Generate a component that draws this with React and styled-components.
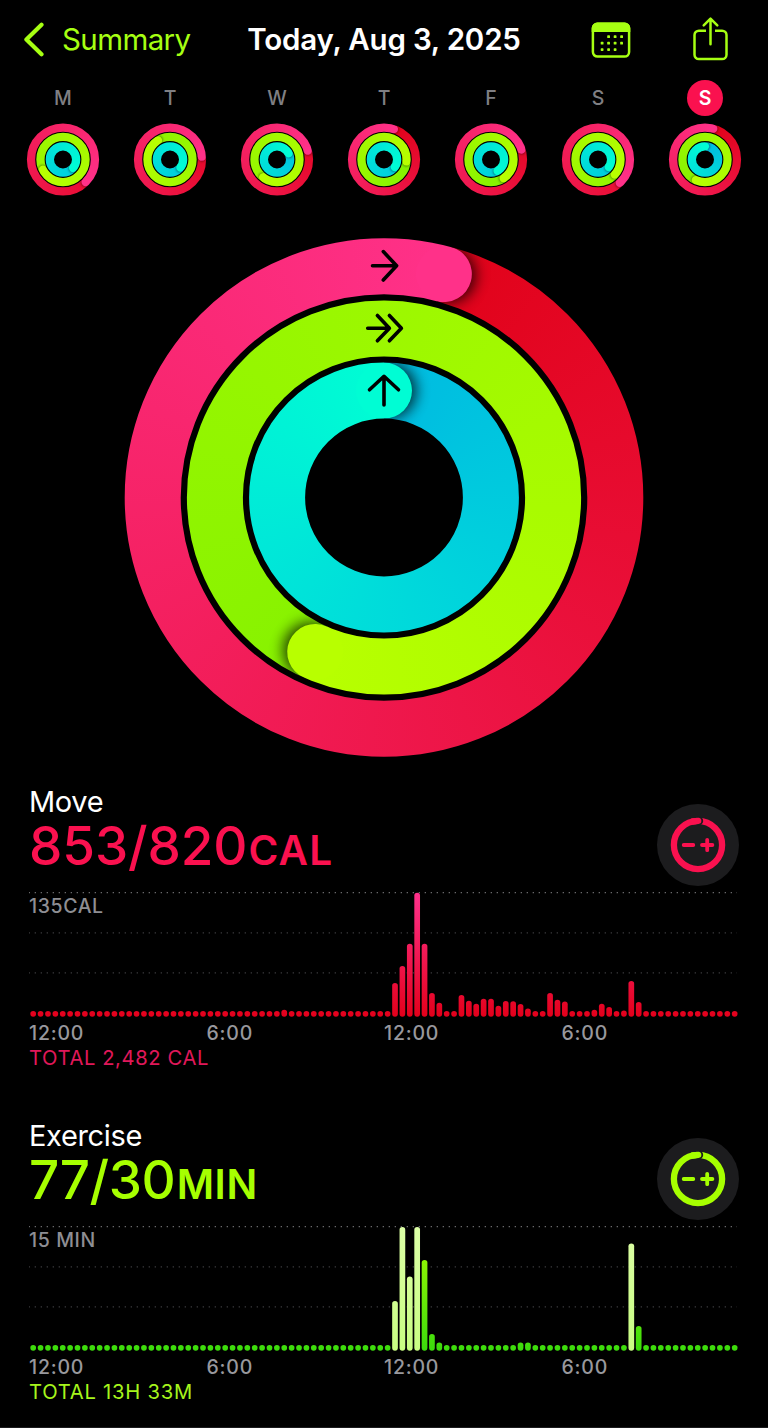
import React from "react";
import styled, { createGlobalStyle } from "styled-components";

const GlobalStyle = createGlobalStyle`
  body {
    margin: 0;
    background: #000;
  }
`;

const Screen = styled.div`
  box-sizing: border-box;
  width: 768px;
  height: 1428px;
  overflow: hidden;
  background: #000;
  border-bottom: 1px solid #1c1c1e;
  font-family: Inter, "Liberation Sans", sans-serif;
  color: #fff;
  white-space: nowrap;
`;

const Header = styled.header`
  display: grid;
  grid-template-columns: 1fr auto 1fr;
  align-items: center;
  height: 78px;
  padding: 0 38px 2px 23px;
`;

const BackLink = styled.a`
  display: flex;
  align-items: center;
  gap: 17px;
  color: #a6ff12;
  font-size: 29.5px;
  letter-spacing: -0.6px;
`;

const Title = styled.h1`
  margin: 0 0 0 15px;
  font-size: 29.5px;
  font-weight: 600;
  letter-spacing: -0.2px;
`;

const Actions = styled.div`
  display: flex;
  justify-content: flex-end;
  align-items: center;
  gap: 61px;

  svg {
    display: block;
  }
`;

const Week = styled.ul`
  display: flex;
  justify-content: space-between;
  margin: 0;
  padding: 0 26px;
  list-style-type: none;
`;

const Day = styled.li`
  display: flex;
  flex-direction: column;
  align-items: center;
  gap: 7px;

  svg {
    display: block;
  }
`;

const DayLetter = styled.span`
  width: 36px;
  line-height: 36px;
  border-radius: 50%;
  text-align: center;
  font-size: 19.5px;
  font-weight: ${(props) => (props.$active ? 600 : 500)};
  color: ${(props) => (props.$active ? "#fff" : "#7f7f83")};
  background: ${(props) => (props.$active ? "#fa114f" : "transparent")};
`;

const Hero = styled.div`
  display: flex;
  justify-content: center;
  padding: 42px 0 28px;

  svg {
    display: block;
  }
`;

const ConicFill = styled.div`
  width: 100%;
  height: 100%;
`;

const Section = styled.section`
  height: 333.7px;
  padding: 0 29px;
`;

const SectionHead = styled.div`
  display: flex;
  justify-content: space-between;
  height: 103px;
`;

const Name = styled.h2`
  margin: 0;
  font-size: 29px;
  font-weight: 400;
  line-height: 34px;
  letter-spacing: -0.35px;
`;

const Value = styled.div`
  margin-top: 1px;
  font-size: 53px;
  font-weight: 500;
  line-height: 52px;
  letter-spacing: ${(props) => props.$spacing}px;
  color: ${(props) => props.$color};
`;

const Unit = styled.span`
  margin-left: ${(props) => props.$gap}px;
  font-size: 40.5px;
  font-weight: 600;
  letter-spacing: ${(props) => props.$spacing}px;
`;

const EditButton = styled.button`
  display: block;
  width: 82px;
  height: 82px;
  margin: 19px 0 0;
  padding: 0;
  border: 0;
  border-radius: 50%;
  background: #1c1c1e;
  color: ${(props) => props.$color};

  svg {
    display: block;
  }
`;

const ChartArea = styled.div`
  position: relative;
  height: 133px;

  svg {
    display: block;
  }
`;

const MaxLabel = styled.span`
  position: absolute;
  left: 0;
  top: 6px;
  font-size: 19.5px;
  font-weight: 500;
  line-height: 24px;
  letter-spacing: 0.6px;
  color: #8e8e93;
`;

const Axis = styled.div`
  display: grid;
  grid-template-columns: repeat(4, 1fr);
  font-size: 19.5px;
  font-weight: 500;
  line-height: 24px;
  letter-spacing: 0.8px;
  color: #98989d;
`;

const Total = styled.div`
  font-size: 20.2px;
  line-height: 26px;
  letter-spacing: ${(props) => props.$spacing}px;
  color: ${(props) => props.$color};
`;

const RING_COLORS = [
  [[224, 0, 20], [255, 49, 137]],
  [[59, 221, 0], [184, 255, 0]],
  [[0, 186, 225], [0, 253, 212]],
];

// total degrees swept by move, exercise and stand
const TODAY = [375, 924, 360];

const DAYS = [
  { letter: "M", rings: [495, 1323, 490] },
  { letter: "T", rings: [445, 1048, 488] },
  { letter: "W", rings: [434, 1298, 422] },
  { letter: "T", rings: [378, 815, 485] },
  { letter: "F", rings: [432, 866, 510] },
  { letter: "S", rings: [497, 1212, 485] },
  { letter: "S", rings: TODAY, active: true },
];

const mix = ([from, to], t) =>
  `rgb(${from.map((c, i) => Math.round(c + (to[i] - c) * t)).join(",")})`;

function Ring({ id, center, radius, width, sweep, colors, shadow }) {
  const size = center * 2;
  const end = mix(colors, 1);
  const start = mix(colors, 1 - 360 / sweep);
  const cap = width / 2;

  return (
    <g>
      <mask id={`${id}-mask`} maskUnits="userSpaceOnUse" x="0" y="0" width={size} height={size}>
        <circle cx={center} cy={center} r={radius} fill="none" stroke="#fff" strokeWidth={width} />
      </mask>
      <clipPath id={`${id}-ahead`}>
        <rect x={center} y={center - radius - width} width={width * 2} height={width * 2} />
      </clipPath>
      <filter id={`${id}-blur`} x="-50%" y="-50%" width="200%" height="200%">
        <feGaussianBlur stdDeviation={width * 0.12} />
      </filter>
      <g mask={`url(#${id}-mask)`}>
        <foreignObject x="0" y="0" width={size} height={size}>
          <ConicFill style={{ background: `conic-gradient(from ${sweep % 360}deg, ${start}, ${end})` }} />
        </foreignObject>
        <g transform={`rotate(${sweep % 360} ${center} ${center})`}>
          <g clipPath={`url(#${id}-ahead)`}>
            <circle
              cx={center + width * 0.08}
              cy={center - radius}
              r={cap}
              fill="#000"
              opacity={shadow}
              filter={`url(#${id}-blur)`}
            />
          </g>
          <circle cx={center} cy={center - radius} r={cap} fill={end} />
        </g>
      </g>
    </g>
  );
}

function Rings({ id, size, outer, pitch, width, sweeps, shadow, children }) {
  return (
    <svg width={size} height={size - 1} viewBox={`0 0.5 ${size} ${size - 1}`}>
      {sweeps.map((sweep, i) => (
        <Ring
          key={i}
          id={`${id}-${i}`}
          center={size / 2}
          radius={outer - width / 2 - pitch * i}
          width={width}
          sweep={sweep}
          colors={RING_COLORS[i]}
          shadow={shadow}
        />
      ))}
      {children}
    </svg>
  );
}

const BackIcon = () => (
  <svg width="22" height="36" viewBox="0 0 22 36" fill="none" stroke="currentColor" strokeWidth="4.2" strokeLinecap="round" strokeLinejoin="round">
    <path d="M18.500 3.700 3.400 18.500 18.500 33.300" />
  </svg>
);

const CalendarIcon = () => (
  <svg width="40" height="37" viewBox="0 0 40 37" fill="none">
    <rect x="1.900" y="2.700" width="36.200" height="32.900" rx="4.600" stroke="#a6ff12" strokeWidth="2.500" />
    <path d="M.7 11V7.200A5.500 5.500 0 0 1 6.200 1.500h27.600A5.500 5.500 0 0 1 39.300 7.200V11Z" fill="#a6ff12" />
    <g fill="#a6ff12">
      {[16.2, 22.7, 29.2].map((x) => (
        <rect key={x} x={x} y="14.300" width="2.800" height="2.800" rx="0.700" />
      ))}
      {[9.7, 16.2, 22.7, 29.2].map((x) => (
        <rect key={x} x={x} y="20.800" width="2.800" height="2.800" rx="0.700" />
      ))}
      {[9.7, 16.2, 22.7].map((x) => (
        <rect key={x} x={x} y="27.200" width="2.800" height="2.800" rx="0.700" />
      ))}
    </g>
  </svg>
);

const ShareIcon = () => (
  <svg width="38" height="46" viewBox="0 0 38 46" fill="none" stroke="#a6ff12" strokeWidth="2.500" strokeLinecap="round" strokeLinejoin="round">
    <path strokeLinecap="butt" d="M14 14.700H6.900a4.400 4.400 0 0 0-4.400 4.400V38.700a4.400 4.400 0 0 0 4.400 4.400h23.200A4.400 4.400 0 0 0 34.500 38.700V19.100A4.400 4.400 0 0 0 30.100 14.700H23" />
    <path d="M18.500 28.200V2.700M11.700 9.400l6.800-6.800 6.800 6.800" />
  </svg>
);

const EditIcon = () => (
  <svg width="82" height="82" viewBox="0 0 82 82" fill="none" stroke="currentColor" strokeLinecap="round">
    <circle cx="41" cy="41" r="24.100" strokeWidth="6.300" />
    <circle cx="42" cy="16.950" r="4.200" fill="#1c1c1e" stroke="none" />
    <path d="M36 17.500 41.200 16.950" strokeWidth="6.300" />
    <path d="M26.700 41H36.300M45 41h10.400M50.200 35.800v10.400" strokeWidth="3.800" />
  </svg>
);

const BAR_STEP = 7.384;
const BAR_WIDTH = 5.7;
const BAR_COUNT = 96;

function Chart({ id, bars, from, to, max }) {
  return (
    <ChartArea>
      <svg width="710" height="133" viewBox="0 0 710 133">
        <linearGradient id={`${id}-fill`} gradientUnits="userSpaceOnUse" x1="0" y1="128.7" x2="0" y2="4.700">
          <stop offset="0" stopColor={from} />
          <stop offset="1" stopColor={to} />
        </linearGradient>
        <linearGradient id={`${id}-light`} gradientUnits="userSpaceOnUse" x1="0" y1="128.7" x2="0" y2="4.700">
          <stop offset="0" stopColor="#c8fd82" />
          <stop offset="1" stopColor="#dcffa6" />
        </linearGradient>
        {[4.7, 44.9, 84.9].map((y, i) => (
          <line
            key={y}
            x1="0"
            x2="708"
            y1={y}
            y2={y}
            stroke={i === 0 ? "#757577" : "#414143"}
            strokeWidth="1.200"
            strokeDasharray="1.200 4.800"
            strokeDashoffset="0.300"
          />
        ))}
        {Array.from({ length: BAR_COUNT }, (_, i) => {
          const [height, light] = bars[i] || [BAR_WIDTH];
          return (
            <rect
              key={i}
              x={4.2 + i * BAR_STEP - BAR_WIDTH / 2}
              y={128.7 - height}
              width={BAR_WIDTH}
              height={height}
              rx={BAR_WIDTH / 2}
              fill={`url(#${id}-${light ? "light" : "fill"})`}
            />
          );
        })}
      </svg>
      <MaxLabel>{max}</MaxLabel>
    </ChartArea>
  );
}

const MOVE_BARS = {
  34: [7], 49: [33.7], 50: [50.7], 51: [73], 52: [124], 53: [73], 54: [23.7], 55: [14],
  58: [21.7], 59: [16], 60: [13], 61: [18], 62: [18], 63: [11], 64: [15.7], 65: [15.5],
  66: [12.7], 67: [8.3], 70: [23.7], 71: [17], 72: [15.3], 76: [7], 77: [13], 78: [9.7],
  80: [6.2], 81: [35.7], 82: [14.7],
};

const EXERCISE_BARS = {
  49: [49.7, true], 50: [123.7, true], 51: [74.3, true], 52: [123.7, true], 53: [90.7],
  54: [16.7], 55: [8.3], 66: [8.3], 67: [8.3], 81: [107.3, true], 82: [24.7],
};

const METRICS = [
  {
    name: "Move",
    value: "853/820",
    valueSpacing: -0.1,
    unit: "CAL",
    unitGap: 1,
    unitSpacing: 1.3,
    color: "#fa114f",
    max: "135CAL",
    total: "TOTAL 2,482 CAL",
    totalColor: "#e0185a",
    totalSpacing: 0.6,
    bars: MOVE_BARS,
    from: "#e3001b",
    to: "#ff318c",
  },
  {
    name: "Exercise",
    value: "77/30",
    valueSpacing: -0.5,
    unit: "MIN",
    unitGap: 1.5,
    unitSpacing: 0.6,
    color: "#a6ff00",
    max: "15 MIN",
    total: "TOTAL 13H 33M",
    totalColor: "#a6f51c",
    totalSpacing: 0.75,
    bars: EXERCISE_BARS,
    from: "#3bdc0c",
    to: "#a9ff00",
  },
];

function Metric({ metric }) {
  return (
    <Section>
      <SectionHead>
        <div>
          <Name>{metric.name}</Name>
          <Value $color={metric.color} $spacing={metric.valueSpacing}>
            {metric.value}
            <Unit $gap={metric.unitGap} $spacing={metric.unitSpacing}>
              {metric.unit}
            </Unit>
          </Value>
        </div>
        <EditButton $color={metric.color}>
          <EditIcon />
        </EditButton>
      </SectionHead>
      <Chart id={metric.name} bars={metric.bars} from={metric.from} to={metric.to} max={metric.max} />
      <Axis>
        <span>12:00</span>
        <span>6:00</span>
        <span>12:00</span>
        <span>6:00</span>
      </Axis>
      <Total $color={metric.totalColor} $spacing={metric.totalSpacing}>
        {metric.total}
      </Total>
    </Section>
  );
}

function App() {
  return (
    <Screen>
      <GlobalStyle />
      <Header>
        <BackLink>
          <BackIcon />
          Summary
        </BackLink>
        <Title>Today, Aug 3, 2025</Title>
        <Actions>
          <CalendarIcon />
          <ShareIcon />
        </Actions>
      </Header>
      <Week>
        {DAYS.map((day, i) => (
          <Day key={i}>
            <DayLetter $active={day.active}>{day.letter}</DayLetter>
            <Rings
              id={`day${i}`}
              size={74}
              outer={36.1}
              pitch={9.4}
              width={8.3}
              sweeps={day.rings}
              shadow={0.45}
            />
          </Day>
        ))}
      </Week>
      <Hero>
        <Rings id="today" size={520} outer={259.3} pitch={62.2} width={56} sweeps={TODAY} shadow={0.75}>
          <g fill="none" stroke="#000" strokeWidth="3.600" strokeLinecap="round" strokeLinejoin="round">
            <path d="M248.500 28.200h24M259.300 14.100l13.300 14.100-13.300 14.300" />
            <path d="M243.700 90.800h21.600M253.400 78l12 12.800-12 12.500M265.400 78l12 12.800-12 12.500" />
            <path d="M260 167.500v-28.500M245.500 152.300 260 138.800l14.500 13.500" />
          </g>
        </Rings>
      </Hero>
      {METRICS.map((metric) => (
        <Metric key={metric.name} metric={metric} />
      ))}
    </Screen>
  );
}

export default App;
